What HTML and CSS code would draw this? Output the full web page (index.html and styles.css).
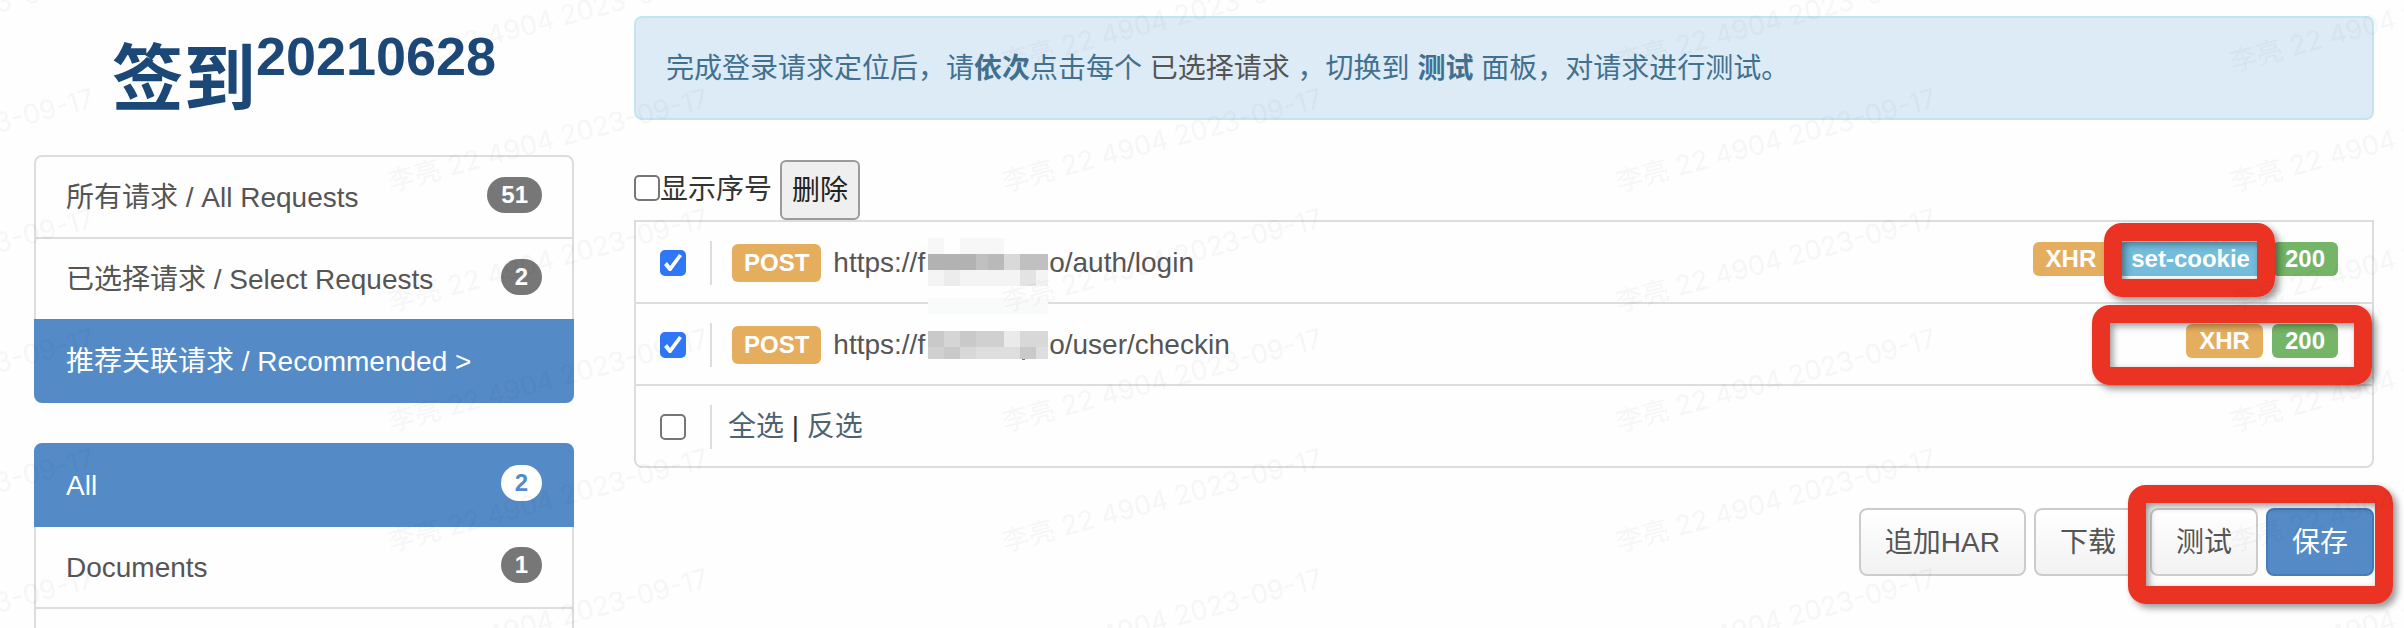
FILE: index.html
```html
<!DOCTYPE html>
<html lang="zh-CN">
<head>
<meta charset="utf-8">
<title>签到 20210628</title>
<meta name="viewport" content="width=device-width, initial-scale=1">
<link rel="stylesheet" href="styles.css">
</head>
<body>
<div class="page">
  <aside class="sidebar">
    <h1 class="title">签到<sup>20210628</sup></h1>
    <nav class="nav-list" aria-label="请求列表">
      <a class="nav-item" href="#all-requests"><span>所有请求 / All Requests</span><span class="count">51</span></a>
      <a class="nav-item" href="#select-requests"><span>已选择请求 / Select Requests</span><span class="count">2</span></a>
      <a class="nav-item active" href="#recommended" aria-current="page"><span>推荐关联请求 / Recommended &gt;</span></a>
    </nav>
    <nav class="nav-list" aria-label="类型">
      <a class="nav-item active" href="#all" aria-current="true"><span>All</span><span class="count">2</span></a>
      <a class="nav-item" href="#documents"><span>Documents</span><span class="count">1</span></a>
      <div class="nav-item nav-rest"></div>
    </nav>
  </aside>

  <main class="content">
    <div class="alert">完成登录请求定位后，请<strong>依次</strong>点击每个 <a href="#select-requests">已选择请求</a> ，切换到 <strong>测试</strong> 面板，对请求进行测试。</div>

    <div class="toolbar">
      <label class="toggle"><input class="check" type="checkbox">显示序号</label>
      <button class="delete" type="button">删除</button>
    </div>

    <ul class="requests">
      <li class="request">
        <input class="check" type="checkbox" checked aria-label="auth/login">
        <span class="divider"></span>
        <span class="method">POST</span>
        <a class="url" href="#login">https://f<span class="mask"><svg class="mosaic" width="120" height="76" viewBox="0 0 120 76" aria-hidden="true" shape-rendering="crispEdges">
          <path fill="#fefefe" d="M0 0h120v76H0z"/>
          <path fill="#f7f7f7" d="M0 0h16v16H0zM32 0h44v16H32z"/>
          <path fill="#b2b2b2" d="M0 16h48v16H0z"/>
          <path fill="#c0c0c0" d="M48 16h12v16H48zM92 16h28v16H92z"/>
          <path fill="#b9b9b9" d="M60 16h16v16H60z"/>
          <path fill="#d9d9d9" d="M76 16h16v16H76z"/>
          <path fill="#f4f4f4" d="M0 32h16v16H0zM32 32h60v16H32zM108 32h12v16h-12z"/>
          <path fill="#ececec" d="M16 32h16v16H16z"/>
          <path fill="#e3e3e3" d="M92 32h16v16H92z"/>
          <path fill="#f9fafa" d="M0 60h120v16H0z"/>
        </svg></span>o/auth/login</a>
        <span class="tags">
          <span class="tag tag-xhr">XHR</span>
          <span class="tag tag-cookie">set-cookie</span>
          <span class="tag tag-ok">200</span>
        </span>
        <span class="mark mark-cookie"></span>
      </li>
      <li class="request">
        <input class="check" type="checkbox" checked aria-label="user/checkin">
        <span class="divider"></span>
        <span class="method">POST</span>
        <a class="url" href="#checkin">https://f<span class="mask"><svg class="mosaic mosaic-low" width="120" height="29" viewBox="0 0 120 29" aria-hidden="true" shape-rendering="crispEdges">
          <path fill="#c9c9c9" d="M0 0h16v16H0zM32 0h16v16H32zM16 16h16v12H16zM92 16h16v12H92z"/>
          <path fill="#d5d5d5" d="M16 0h16v16H16z"/>
          <path fill="#d0d0d0" d="M48 0h28v16H48zM0 16h16v12H0z"/>
          <path fill="#eaeaea" d="M76 0h16v16H76z"/>
          <path fill="#d8d8d8" d="M92 0h28v16H92zM32 16h16v12H32z"/>
          <path fill="#dedede" d="M48 16h44v12H48zM108 16h12v12h-12z"/>
          <path fill="#777" d="M94 28h3v1h-3z"/>
        </svg></span>o/user/checkin</a>
        <span class="tags">
          <span class="tag tag-xhr">XHR</span>
          <span class="tag tag-ok">200</span>
        </span>
        <span class="mark mark-status"></span>
      </li>
      <li class="request">
        <input class="check" type="checkbox" aria-label="全选">
        <span class="divider"></span>
        <span class="select-links"><a href="#select-all">全选</a> | <a href="#invert">反选</a></span>
      </li>
    </ul>

    <div class="actions">
      <button class="btn" type="button">追加HAR</button>
      <button class="btn" type="button">下载</button>
      <button class="btn" type="button">测试</button>
      <button class="btn btn-primary" type="button">保存</button>
      <span class="mark mark-actions"></span>
    </div>
  </main>

  <svg class="watermark" aria-hidden="true">
    <defs>
      <pattern id="wm" x="380" y="78" width="614" height="120" patternUnits="userSpaceOnUse">
        <text class="watermark-text" transform="translate(11 114) rotate(-15)">李亮 22 4904 2023-09-17</text>
      </pattern>
    </defs>
    <rect width="100%" height="100%" fill="url(#wm)"/>
  </svg>
</div>
</body>
</html>
```

FILE: styles.css
```css
* {
  box-sizing: border-box;
}

body {
  margin: 0;
  background: #fefefe;
  color: #333;
  font: 28px/40px "Liberation Sans", "Noto Sans CJK SC", sans-serif;
}

a {
  color: inherit;
  text-decoration: none;
}

.page {
  position: relative;
  display: grid;
  grid-template-columns: 1fr 3fr;
  height: 100vh;
  padding-left: 4px;
  overflow: hidden;
}

.sidebar,
.content {
  min-width: 0;
  padding: 0 30px;
}

/* Sidebar */

.title {
  margin: 0;
  padding: 39px 0 36px;
  color: #1c4877;
  font-size: 72px;
  font-weight: 700;
  line-height: 80px;
  text-align: center;
}

.title sup {
  font-size: 54px;
  line-height: 0;
  vertical-align: 29px;
}

.nav-list {
  margin-bottom: 40px;
}

.nav-item {
  display: flex;
  justify-content: space-between;
  align-items: flex-start;
  padding: 21px 30px 19px;
  border: 2px solid #ddd;
  color: #555;
}

.nav-item + .nav-item {
  margin-top: -2px;
}

.nav-item:first-child {
  border-radius: 8px 8px 0 0;
}

.nav-item:last-child {
  border-radius: 0 0 8px 8px;
}

.nav-item.active {
  position: relative;
  border-color: #548ac6;
  background: #548ac6;
  color: #fff;
}

.nav-rest {
  height: 84px;
}

.count {
  margin-top: -1px;
  padding: 0 14px;
  border-radius: 20px;
  background: #777;
  color: #fff;
  font-size: 24px;
  font-weight: 700;
  line-height: 36px;
}

.active .count {
  background: #fff;
  color: #548ac6;
}

/* Main column */

.alert {
  margin-top: 16px;
  padding: 31px 30px 29px;
  border: 2px solid #c1e6f0;
  border-radius: 8px;
  background: #dcebf6;
  color: #42708f;
}

.alert a {
  color: #555;
}

.toolbar {
  display: flex;
  align-items: center;
  gap: 8px;
  margin-top: 40px;
}

.toggle {
  display: flex;
  align-items: center;
}

.check {
  position: relative;
  flex: none;
  width: 26px;
  height: 26px;
  margin: 0;
  border: 2px solid #767676;
  border-radius: 5px;
  background: #fff;
  appearance: none;
}

.toggle .check {
  margin-bottom: 4px;
}

.check:checked {
  border-color: #2f77f6;
  background: #2f77f6;
}

.check:checked::after {
  position: absolute;
  inset: -2px;
  background: #fff;
  clip-path: polygon(4px 15px, 7px 12px, 10px 16px, 19px 4px, 22px 6px, 11px 21px, 9px 21px);
  content: "";
}

.delete {
  padding: 9px 10px 7px;
  border: 2px solid #9b9b9b;
  border-radius: 6px;
  background: #efefef;
  color: #222;
  font: inherit;
}

.requests {
  margin: 0;
  padding: 0;
  list-style: none;
}

.request {
  position: relative;
  display: flex;
  align-items: center;
  height: 84px;
  padding: 21px 24px 19px;
  border: 2px solid #ddd;
}

.request + .request {
  margin-top: -2px;
}

.request:last-child {
  border-radius: 0 0 8px 8px;
}

.divider {
  width: 2px;
  height: 44px;
  margin: 0 16px 0 24px;
  background: #ddd;
}

.method {
  margin: 0 12px 0 4px;
  padding: 0 12px;
  border-radius: 6px;
  background: #e5ae5f;
  color: #fff;
  font-size: 24px;
  font-weight: 700;
  line-height: 38px;
}

.url {
  color: #555;
}

.mask {
  position: relative;
  display: inline-block;
  width: 124px;
}

.mosaic {
  position: absolute;
  bottom: -42px;
  left: 3px;
  z-index: 1;
}

.mosaic-low {
  bottom: -6px;
}

.tags {
  display: flex;
  align-self: flex-start;
  gap: 9px;
  margin-top: -1px;
  margin-right: 10px;
  margin-left: auto;
}

.tag {
  padding: 0 13px;
  border-radius: 6px;
  color: #fff;
  font-size: 24px;
  font-weight: 700;
  line-height: 34px;
}

.tag-xhr {
  background: #e5ae5f;
}

.tag-cookie {
  background: #73bcdb;
}

.tag-ok {
  background: #75b567;
}

.select-links a {
  color: #4f6272;
}

.actions {
  position: relative;
  display: flex;
  justify-content: flex-end;
  gap: 8px;
  margin-top: 40px;
}

.btn {
  padding: 13px 24px 11px;
  border: 2px solid #ccc;
  border-radius: 8px;
  background: linear-gradient(#fff, #f2f2f2);
  color: #555;
  font: inherit;
}

.btn-primary {
  border-color: #447cbc;
  background: #548ac6;
  color: #fff;
}

/* Red highlight frames laid over the controls they point at */

.mark {
  position: absolute;
  z-index: 2;
  border: 18px solid #eb3323;
  border-radius: 18px;
  box-shadow: 4px 4px 7px rgba(0, 0, 0, .4), inset 3px 3px 7px rgba(0, 0, 0, .4);
  pointer-events: none;
}

.mark-cookie {
  top: 1px;
  right: 97px;
  width: 171px;
  height: 74px;
}

.mark-status {
  top: 1px;
  right: 0;
  width: 280px;
  height: 80px;
}

.mark-actions {
  top: -23px;
  right: -19px;
  width: 265px;
  height: 119px;
}

.watermark {
  position: absolute;
  inset: 0;
  z-index: 3;
  width: 100%;
  height: 100%;
  pointer-events: none;
}

.watermark-text {
  fill: #000;
  fill-opacity: .03;
  font-family: Inter, "Noto Sans CJK SC", sans-serif;
  font-size: 27px;
}
```
